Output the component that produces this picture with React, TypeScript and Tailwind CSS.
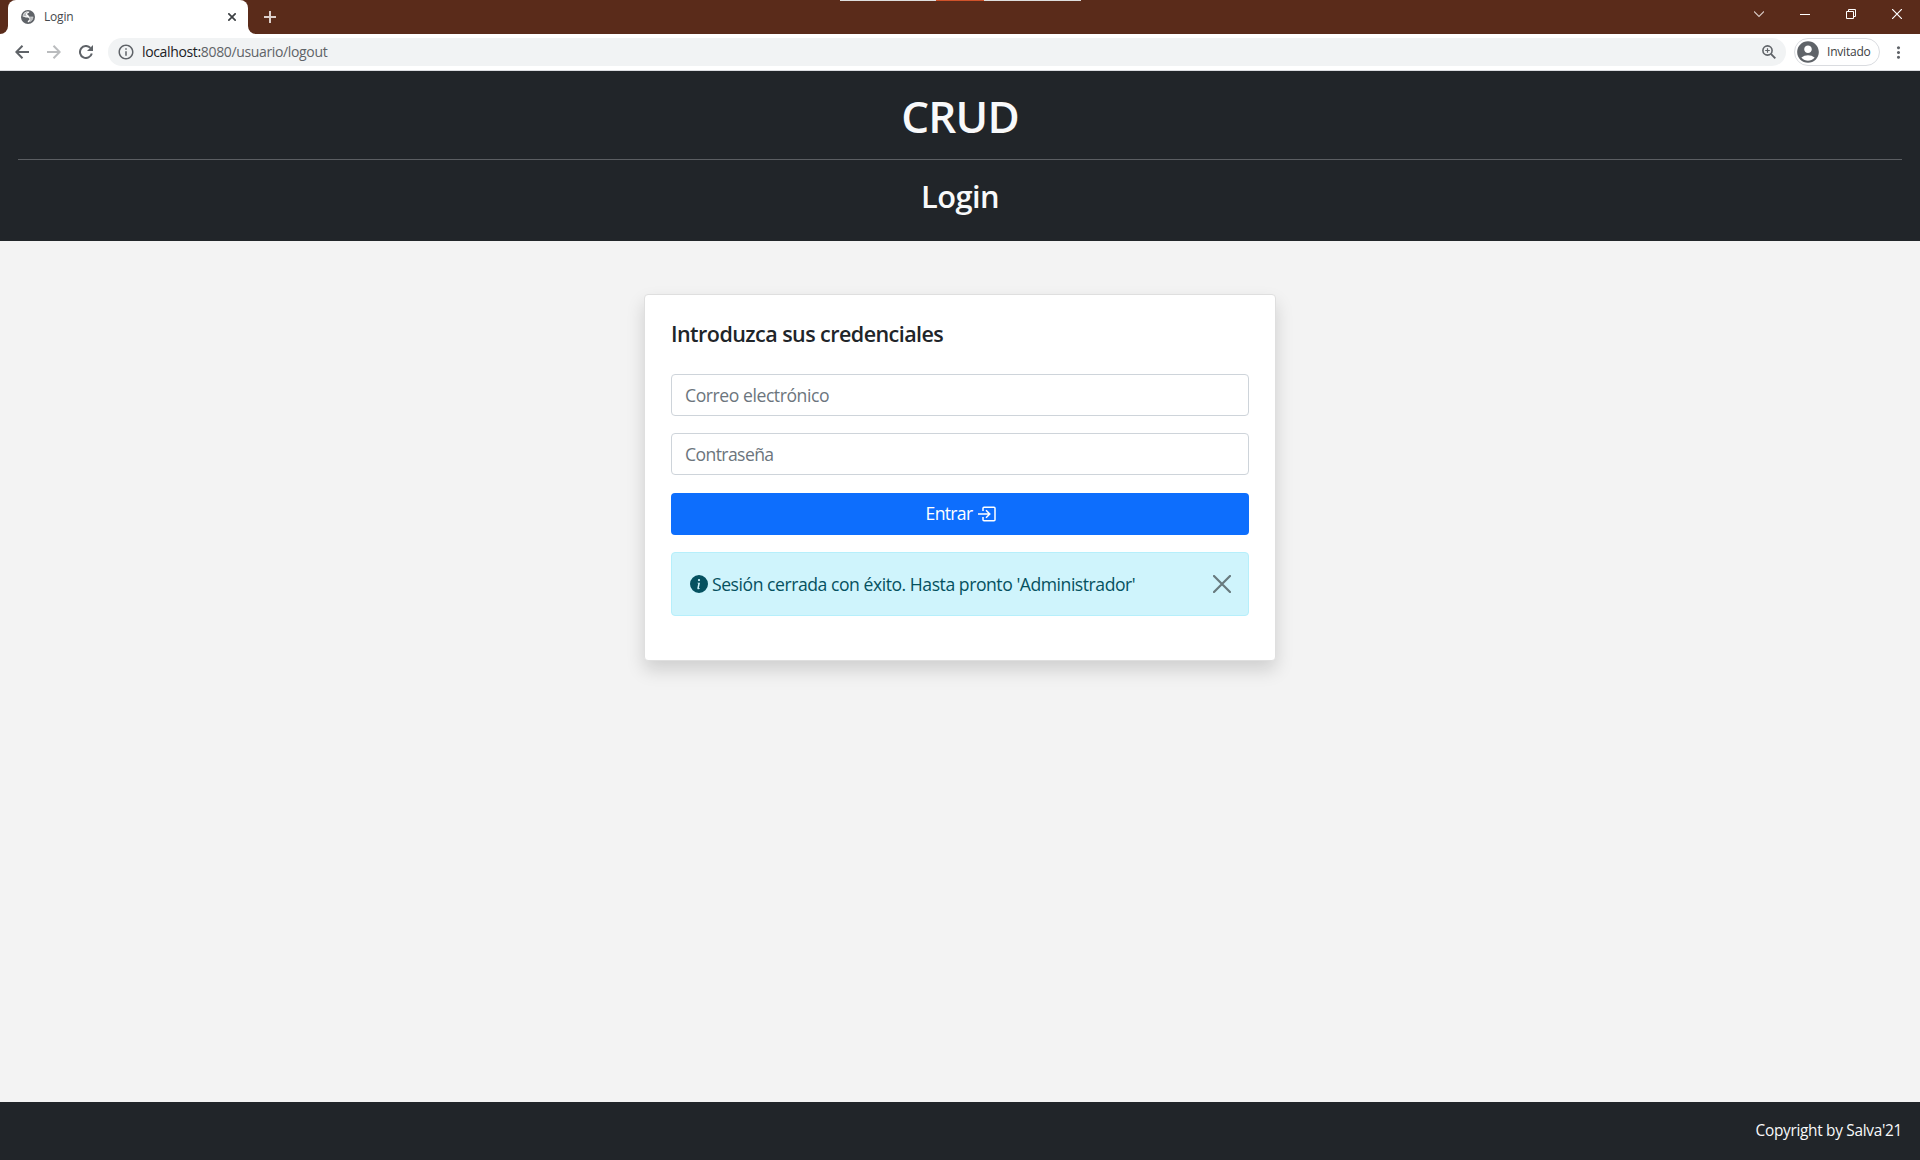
import React from "react";
import { BsInfoCircleFill } from "react-icons/bs";
import { MdAccountCircle, MdMoreVert, MdInfoOutline } from "react-icons/md";

function GlobeIcon() {
  return (
    <svg className="h-[14px] w-[14px]" viewBox="0 0 14 14">
      <circle cx="7" cy="7" r="7" fill="#5f6368" />
      <path d="M8.400 1.700C8.500 3 6.300 2.800 6.200 4c0 1 1.300.8 1.500 1.800.2.8 1 1 2 .9l2.600.1c.1 3-2.200 5.400-5 5.500l-.5-.1c-.2-1 .2-1.500 1-1.900.8-.5.9-1.200.3-1.900C7.300 7.500 6 7.700 5 7.600L1.700 6.500C1.900 3.600 4.200 1.600 7 1.600z" fill="#fff" />
      <path d="M8.800 6.800c1.300.6 2.400.2 3.400.4-.1 2.600-2.200 4.700-4.300 5 .1-.8 1-1.200 1.200-2.100.2-1-.4-1.500-.9-2zM2 6.200C2.400 3.900 4.400 1.900 6.800 1.800 6.600 2.700 5 3 5 4.200c0 1 .6 1.400 1 2z" fill="#5f6368" opacity=".45" />
    </svg>
  );
}

function TabBar() {
  return (
    <div className="relative flex h-[34px] shrink-0 bg-[#5a2b1a]">
      <div className="flex w-2 items-end bg-white">
        <div className="h-full w-full rounded-br-[8px] bg-[#5a2b1a]" />
      </div>
      <div className="flex w-[240px] items-center bg-[#5a2b1a]">
        <div className="flex h-full w-full items-center rounded-t-[8px] bg-white pl-[13px] pr-[12px]">
          <GlobeIcon />
          <span className="ml-[9px] text-[12px] tracking-[-0.2px] text-[#45494d]">Login</span>
          <svg className="ml-auto h-[8px] w-[8px]" viewBox="0 0 8 8" stroke="#3c4043" strokeWidth="1.7">
            <path d="M.3 .3l7.400 7.400M7.700 .3L.3 7.700" />
          </svg>
        </div>
      </div>
      <div className="flex w-2 bg-white">
        <div className="h-full w-full rounded-bl-[8px] bg-[#5a2b1a]" />
      </div>
      <svg className="ml-2 mt-[11px] h-3 w-3" viewBox="0 0 12 12" stroke="#dccfcb" strokeWidth="2">
        <path d="M6 0v12M0 6h12" />
      </svg>
      <div className="absolute left-[840px] top-0 flex h-px w-[241px]">
        <div className="w-24 bg-[#dedede]" />
        <div className="w-12 bg-[#d0522a]" />
        <div className="flex-1 bg-[#dedede]" />
      </div>
      <div className="ml-auto flex h-7 items-center gap-9 pr-[18px]">
        <svg className="h-[10px] w-[10px]" viewBox="0 0 10 10" fill="none" stroke="#d8cac5" strokeWidth="1.1">
          <path d="M0 2.500l5 5 5-5" />
        </svg>
        <svg className="h-[10px] w-[10px]" viewBox="0 0 10 10" stroke="#fff" shapeRendering="crispEdges">
          <path d="M0 5.500h10" />
        </svg>
        <svg className="h-[10px] w-[10px]" viewBox="0 0 10 10" fill="none" stroke="#fff">
          <path d="M.5 2.500h7v7h-7zM2.500 2.500v-2h7v7h-2" />
        </svg>
        <svg className="h-[10px] w-[10px]" viewBox="0 0 10 10" stroke="#fff" strokeWidth="1.2">
          <path d="M0 0l10 10M10 0L0 10" />
        </svg>
      </div>
    </div>
  );
}

function Toolbar() {
  return (
    <div className="flex h-[37px] shrink-0 items-center border-b border-[#dadce0] bg-white pl-[15px]">
      <svg className="h-[14px] w-[14px]" viewBox="0 0 14 14" fill="none" stroke="#5f6368" strokeWidth="2">
        <path d="M14 7H1.500M7.500 .8L1.300 7l6.200 6.200" />
      </svg>
      <svg className="ml-[18px] h-[14px] w-[14px]" viewBox="0 0 14 14" fill="none" stroke="#babcbe" strokeWidth="2">
        <path d="M0 7h12.500M6.500 .8L12.700 7l-6.200 6.200" />
      </svg>
      <svg className="ml-[18px] h-[14px] w-[14px]" viewBox="0 0 14 14" fill="none">
        <path d="M12.800 8.500A6 6 0 1 1 11.400 2.900" stroke="#5f6368" strokeWidth="2" />
        <path d="M14 0v6H8z" fill="#5f6368" />
      </svg>
      <div className="ml-[15px] flex h-7 flex-1 items-center rounded-full bg-[#f1f3f4] pl-[9px] pr-[10px]">
        <MdInfoOutline className="h-[18px] w-[18px] text-[#5f6368]" />
        <span className="-mt-px ml-[7px] text-[14px] tracking-[-0.35px] text-[#5f6368]">
          <span className="text-[#202124]">localhost:</span>8080/usuario/logout
        </span>
        <svg className="ml-auto h-[14px] w-[14px]" viewBox="0 0 14 14" fill="none" stroke="#5f6368">
          <circle cx="5.500" cy="5.500" r="4.600" strokeWidth="1.600" />
          <path d="M8.900 8.900l4.400 4.400" strokeWidth="1.900" />
          <path d="M5.500 3.200v4.600M3.200 5.500h4.600" strokeWidth="1.200" />
        </svg>
      </div>
      <div className="ml-2 flex h-7 w-[86px] items-center rounded-full border border-[#dadce0]">
        <MdAccountCircle className="h-[26px] w-[26px] text-[#5f6368]" />
        <span className="-mt-px ml-[6px] text-[12px] tracking-[-0.2px] text-[#3c4043]">Invitado</span>
      </div>
      <MdMoreVert className="ml-[9px] mr-3 h-[19px] w-[19px] text-[#5f6368]" />
    </div>
  );
}

function EnterIcon() {
  return (
    <svg className="ml-[6px] h-[18px] w-[18px]" viewBox="0 0 18 18" fill="none" stroke="#fff" strokeWidth="1.5">
      <path d="M5 6V3.200a1 1 0 0 1 1-1h10a1 1 0 0 1 1 1v11.600a1 1 0 0 1-1 1H6a1 1 0 0 1-1-1V12M0 9h11.500M8 5.200L11.800 9 8 12.800" />
    </svg>
  );
}

function LoginCard() {
  return (
    <div className="mx-auto mt-[53px] flex h-[367px] w-[632px] flex-col rounded-[4px] border border-[#dfdfdf] bg-white px-[26px] pt-[26px] shadow-[0_9px_18px_rgba(0,0,0,0.15)]">
      <h5 className="text-[21.5px] font-semibold leading-[26px] tracking-[-0.55px] text-[#212529]">Introduzca sus credenciales</h5>
      <input placeholder="Correo electrónico" className="mt-[27px] h-[42px] rounded-[4px] border border-[#ced4da] px-[13px] text-[17.6px] tracking-[-0.44px] placeholder:text-[#6c757d]" />
      <input placeholder="Contraseña" className="mt-[17px] h-[42px] rounded-[4px] border border-[#ced4da] px-[13px] text-[17.6px] tracking-[-0.6px] placeholder:text-[#6c757d]" />
      <button className="mt-[18px] flex h-[42px] items-center justify-center rounded-[4px] bg-[#0d6efd] pl-[2px] text-[17.6px] tracking-[-0.7px] text-white">
        <span className="-mt-px">Entrar</span>
        <EnterIcon />
      </button>
      <div className="mt-[17px] flex h-16 items-center rounded-[4px] border border-[#b6effb] bg-[#cff4fc] pl-[18px] pr-[17px] text-[#055160]">
        <BsInfoCircleFill className="h-[18px] w-[18px]" />
        <span className="ml-1 text-[17.6px] tracking-[-0.46px]">Sesión cerrada con éxito. Hasta pronto 'Administrador'</span>
        <svg className="ml-auto h-[18px] w-[18px]" viewBox="0 0 18 18" stroke="#687a7e" strokeWidth="2.2" strokeLinecap="round">
          <path d="M1 1l16 16M17 1L1 17" />
        </svg>
      </div>
    </div>
  );
}

export default function App() {
  return (
    <div className="flex h-[1160px] w-[1920px] flex-col overflow-hidden bg-[#f3f3f3] font-['Open_Sans','Noto_Sans',sans-serif]">
      <TabBar />
      <Toolbar />
      <header className="flex h-[170px] shrink-0 flex-col bg-[#212529] px-[18px] text-center text-[#f8f9fa]">
        <h1 className="mt-[19px] text-[44px] font-semibold leading-[53px] tracking-[-0.8px]">CRUD</h1>
        <hr className="mt-4 border-[#5b5e62]" />
        <h2 className="mt-[18px] text-[30.8px] font-semibold leading-[37px] tracking-[-0.6px]">Login</h2>
      </header>
      <main className="flex-1">
        <LoginCard />
      </main>
      <footer className="flex h-[58px] shrink-0 items-center justify-end bg-[#212529] pr-[18px] text-[15.4px] tracking-[-0.3px] text-[#f8f9fa]">
        Copyright by Salva'21
      </footer>
    </div>
  );
}
